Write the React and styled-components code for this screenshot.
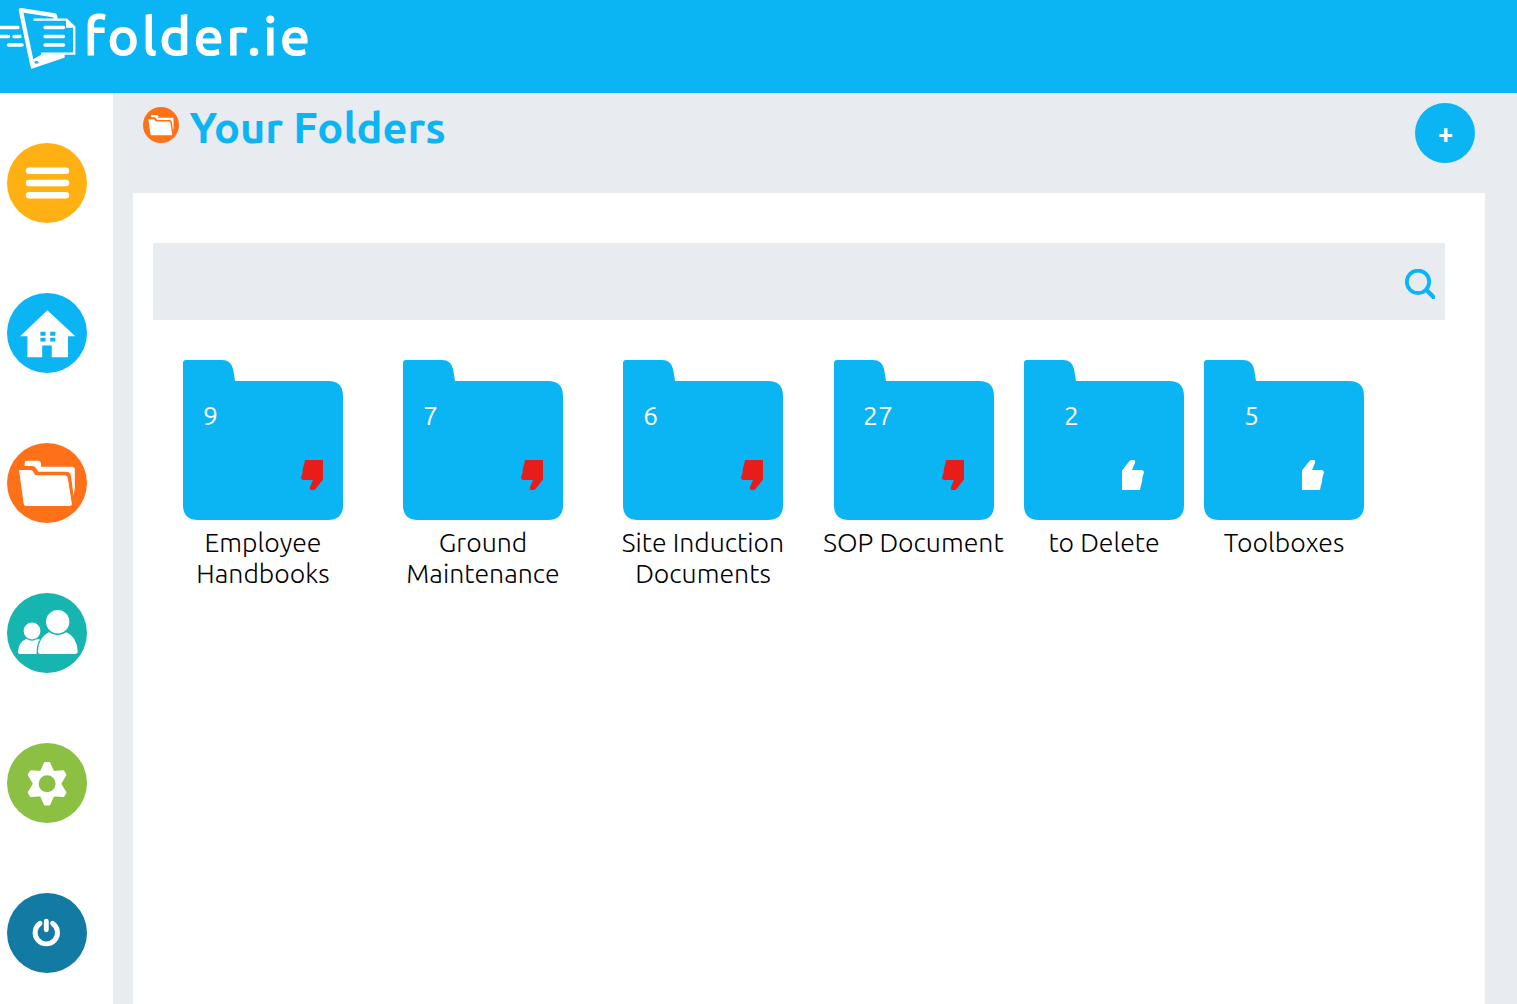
import React from 'react'
import styled, { createGlobalStyle } from 'styled-components'

const GlobalStyle = createGlobalStyle`
  * {
    box-sizing: border-box;
  }
  body {
    margin: 0;
    background: #e8ebf0;
    font-family: Ubuntu, 'Open Sans', 'Noto Sans', sans-serif;
    font-weight: 300;
    color: #000;
  }
  svg {
    display: block;
  }
`

const folders = [
  { id: 1, name: 'Employee Handbooks', count: 9, done: false, width: 220 },
  { id: 2, name: 'Ground Maintenance', count: 7, done: false, width: 220 },
  { id: 3, name: 'Site Induction Documents', count: 6, done: false, width: 220 },
  { id: 4, name: 'SOP Document', count: 27, done: false, width: 201 },
  { id: 5, name: 'to Delete', count: 2, done: true, width: 180 },
  { id: 6, name: 'Toolboxes', count: 5, done: true, width: 180 },
]

// icons

const LogoMark = () => (
  <svg width='80' height='76' viewBox='0 0 80 76' fill='none' stroke='#fff'>
    <path d='M55.8 19 L54.8 15.3 L20.8 10.2 L32.5 66' strokeWidth='4.2' strokeLinejoin='round' />
    <path
      d='M31.5 68 L64 57 V54.3 L41 55.5 L33 60 Z'
      fill='#fff'
      strokeWidth='1.4'
      strokeLinejoin='round'
    />
    <ellipse cx='36.5' cy='62.3' rx='2.1' ry='1.4' fill='#0bb4f2' stroke='none' />
    <path d='M33.5 19.6 H66.5 L74.2 27 V53.6 H41' strokeWidth='2.4' />
    <path d='M66 19 V27.7 H75 Z' fill='#fff' stroke='none' />
    <path d='M45 27.5 H63.5 M45 36.5 H63.5 M45 45 H63.5' strokeWidth='3.4' strokeLinecap='round' />
    <path
      d='M0 27.5 H18 M0 36.5 H8.5 M14 36.5 H20 M8.5 45 H22'
      strokeWidth='3.4'
      strokeLinecap='round'
    />
  </svg>
)

const MenuIcon = () => (
  <path
    d='M22 27.7 H59 M22 40 H59 M22 52.2 H59'
    stroke='#fff'
    strokeWidth='6.4'
    strokeLinecap='round'
  />
)

const HomeIcon = () => (
  <path
    fill='#fff'
    fillRule='evenodd'
    d='M40.3 17.3 L68.3 43.3 H61 V64.3 H44.8 V52.6 H35.2 V64.3 H20.4 V43.3 H13.2 Z M33.4 38.8 H38.6 V42.8 H33.4 Z M43.2 38.8 H48.4 V42.8 H43.2 Z M33.4 44.8 H38.6 V48.6 H33.4 Z M43.2 44.8 H48.4 V48.6 H43.2 Z'
  />
)

const FoldersIcon = () => (
  <g fill='#fff'>
    <path d='M17.7 23 V19.5 Q17.7 17.7 19.5 17.7 H31 Q33.6 17.7 34 20.5 V23.8 H65 Q67.8 23.8 67.8 26.5 V45 L66.6 53 L64 33 Q63.3 28.7 59 28.7 H31.5 L28.5 24.5 Q27.5 23 25.5 23 Z' />
    <path d='M12 27 H23.5 Q25.5 27 26.3 28.8 L27.5 31 Q28.3 32.3 30 32.3 H57.5 Q60.3 32.3 60.8 35 L64.8 60.5 Q65 63 62.5 63 H19.5 Q17 63 16.6 60.5 Z' />
  </g>
)

const UsersIcon = () => (
  <g fill='#fff'>
    <circle cx='25' cy='38' r='8.4' />
    <path d='M11 58.5 Q11.5 49 19.5 45.7 Q25 49.6 30.5 45.7 L33 46.5 Q29.3 51.5 29.6 60.9 H12.5 Q11 60.9 11 58.5 Z' />
    <circle cx='50.7' cy='28.7' r='11.7' />
    <path d='M30.9 58.5 Q31.5 44 42 39.3 Q50.7 45 59.5 39.3 Q70 44 70.7 58.5 Q70.7 60.9 68.5 60.9 H33 Q30.9 60.9 30.9 58.5 Z' />
  </g>
)

const SettingsIcon = () => (
  <path
    fill='#fff'
    fillRule='evenodd'
    stroke='#fff'
    strokeWidth='3'
    strokeLinejoin='round'
    d='M38.2 20.6 H42 L46 29.6 L56 28.8 L57.9 31.8 L52.6 40.7 L57.9 49.6 L56 52.6 L46 51.8 L42 61 H38.2 L34.2 51.8 L24.2 52.6 L22.3 49.6 L27.6 40.7 L22.3 31.8 L24.2 28.8 L34.2 29.6 Z M40.1 30.7 A10 10 0 1 0 40.1 50.7 A10 10 0 1 0 40.1 30.7 Z'
  />
)

const PowerIcon = () => (
  <path
    fill='none'
    stroke='#fff'
    strokeWidth='4.9'
    strokeLinecap='round'
    d='M33 30.4 A11.2 11.2 0 1 0 45.6 30.4 M39.3 28.3 V36.8'
  />
)

const SearchIcon = () => (
  <svg width='30' height='30' viewBox='0 0 30 30' fill='none' stroke='#0bb4f2'>
    <circle cx='13' cy='12.8' r='11.2' strokeWidth='3.8' />
    <path d='M21 20.5 L30 29.5' strokeWidth='4.4' />
  </svg>
)

const FolderShape = () => (
  <svg width='160' height='160' viewBox='0 0 160 160' fill='#0bb4f2'>
    <path d='M0 3 Q0 0 3 0 H39 Q48 0 50 9 Q50.8 13 52 21 H145 Q160 21 160 36 V145 Q160 160 145 160 H15 Q0 160 0 145 Z' />
  </svg>
)

const Thumb = ({ up }) => (
  <svg width='22' height='30' viewBox='0 0 22 30' fill={up ? '#fff' : '#e81c18'}>
    <path
      transform={up ? 'rotate(180 11 15)' : undefined}
      d='M4 0 H22 V19.5 L14.5 29 Q13.5 30 12 30 H9.5 Q8.5 29 9 27 L12 20 H2 Q0 19.5 0 17.5 L1.5 13 L2 8 L3.2 4 Z'
    />
  </svg>
)

const navItems = [
  { id: 'menu', color: '#ffb012', icon: <MenuIcon /> },
  { id: 'home', color: '#0bb4f2', icon: <HomeIcon /> },
  { id: 'folders', color: '#ff7119', icon: <FoldersIcon /> },
  { id: 'users', color: '#17b5b0', icon: <UsersIcon /> },
  { id: 'settings', color: '#8bc043', icon: <SettingsIcon /> },
  { id: 'logout', color: '#127aa3', icon: <PowerIcon /> },
]

const RoundIcon = ({ size, color, children }) => (
  <svg width={size} height={size} viewBox='0 0 80 80'>
    <circle cx='40' cy='40' r='40' fill={color} />
    {children}
  </svg>
)

const Folder = ({ folder }) => (
  <Tile $width={folder.width}>
    <FolderBox>
      <FolderShape />
    </FolderBox>
    <Count>{folder.count}</Count>
    <Status>
      <Thumb up={folder.done} />
    </Status>
    <Label>{folder.name}</Label>
  </Tile>
)

const App = () => {
  return (
    <>
      <GlobalStyle />
      <Header>
        <LogoMark />
        <LogoText>folder.ie</LogoText>
      </Header>
      <Page>
        <Sidebar>
          {navItems.map((item) => (
            <NavButton type='button' key={item.id} aria-label={item.id}>
              <RoundIcon size={80} color={item.color}>
                {item.icon}
              </RoundIcon>
            </NavButton>
          ))}
        </Sidebar>
        <Main>
          <TitleBar>
            <RoundIcon size={36} color='#ff7119'>
              <FoldersIcon />
            </RoundIcon>
            <Title>Your Folders</Title>
            <AddButton type='button'>+</AddButton>
          </TitleBar>
          <Panel>
            <SearchBar>
              <SearchIcon />
            </SearchBar>
            <FolderList>
              {folders.map((folder) => (
                <Folder key={folder.id} folder={folder} />
              ))}
            </FolderList>
          </Panel>
        </Main>
      </Page>
    </>
  )
}

const Header = styled.header`
  display: flex;
  align-items: flex-start;
  height: 93px;
  background: #0bb4f2;
`

const LogoText = styled.span`
  padding: 5px 0 0 4px;
  font-size: 53px;
  line-height: 61px;
  font-weight: 500;
  letter-spacing: 2.9px;
  color: #fff;
  -webkit-text-stroke: 1.1px #fff;
`

const Page = styled.div`
  display: flex;
  height: 911px;
`

const Sidebar = styled.nav`
  display: flex;
  flex-direction: column;
  gap: 70px;
  flex: 0 0 113px;
  padding: 50px 0 0 7px;
  background: #fff;
  overflow: hidden;
`

const NavButton = styled.button`
  flex: none;
  width: 80px;
  height: 80px;
  padding: 0;
  border: 0;
  background: none;
  cursor: pointer;
`

const Main = styled.main`
  display: flex;
  flex-direction: column;
  flex: 1;
  padding: 0 32px 0 20px;
`

const TitleBar = styled.div`
  display: flex;
  align-items: flex-start;
  height: 100px;
  padding: 10px 10px 0 10px;

  > svg {
    margin-top: 4px;
  }
`

const Title = styled.h1`
  margin: 0 auto 0 10.5px;
  font-size: 43.3px;
  line-height: 48px;
  font-weight: 700;
  color: #0bb4f2;
`

const AddButton = styled.button`
  width: 60px;
  height: 60px;
  padding: 0 0 1px 1px;
  border: 0;
  border-radius: 50%;
  background: #0bb4f2;
  color: #fff;
  font-family: inherit;
  font-size: 27px;
  font-weight: 700;
  cursor: pointer;
`

const Panel = styled.section`
  flex: 1;
  padding: 50px 40px 0 20px;
  background: #fff;
`

const SearchBar = styled.div`
  display: flex;
  justify-content: flex-end;
  height: 77px;
  padding: 26px 10px 0;
  background: #e8ebf0;
`

const FolderList = styled.div`
  display: flex;
  align-items: flex-start;
  margin-top: 40px;
`

const Tile = styled.div`
  position: relative;
  flex: none;
  width: ${(props) => props.$width}px;
`

const FolderBox = styled.div`
  display: flex;
  justify-content: center;
`

const Count = styled.span`
  position: absolute;
  top: 40px;
  left: 50px;
  font-size: 26.67px;
  line-height: 31px;
  font-weight: 400;
  color: #fff;
`

const Status = styled.span`
  position: absolute;
  top: 100px;
  right: 50px;
`

const Label = styled.p`
  margin: 0;
  padding: 7px 10px 0;
  font-size: 26.67px;
  line-height: 31px;
  text-align: center;
`

export default App
